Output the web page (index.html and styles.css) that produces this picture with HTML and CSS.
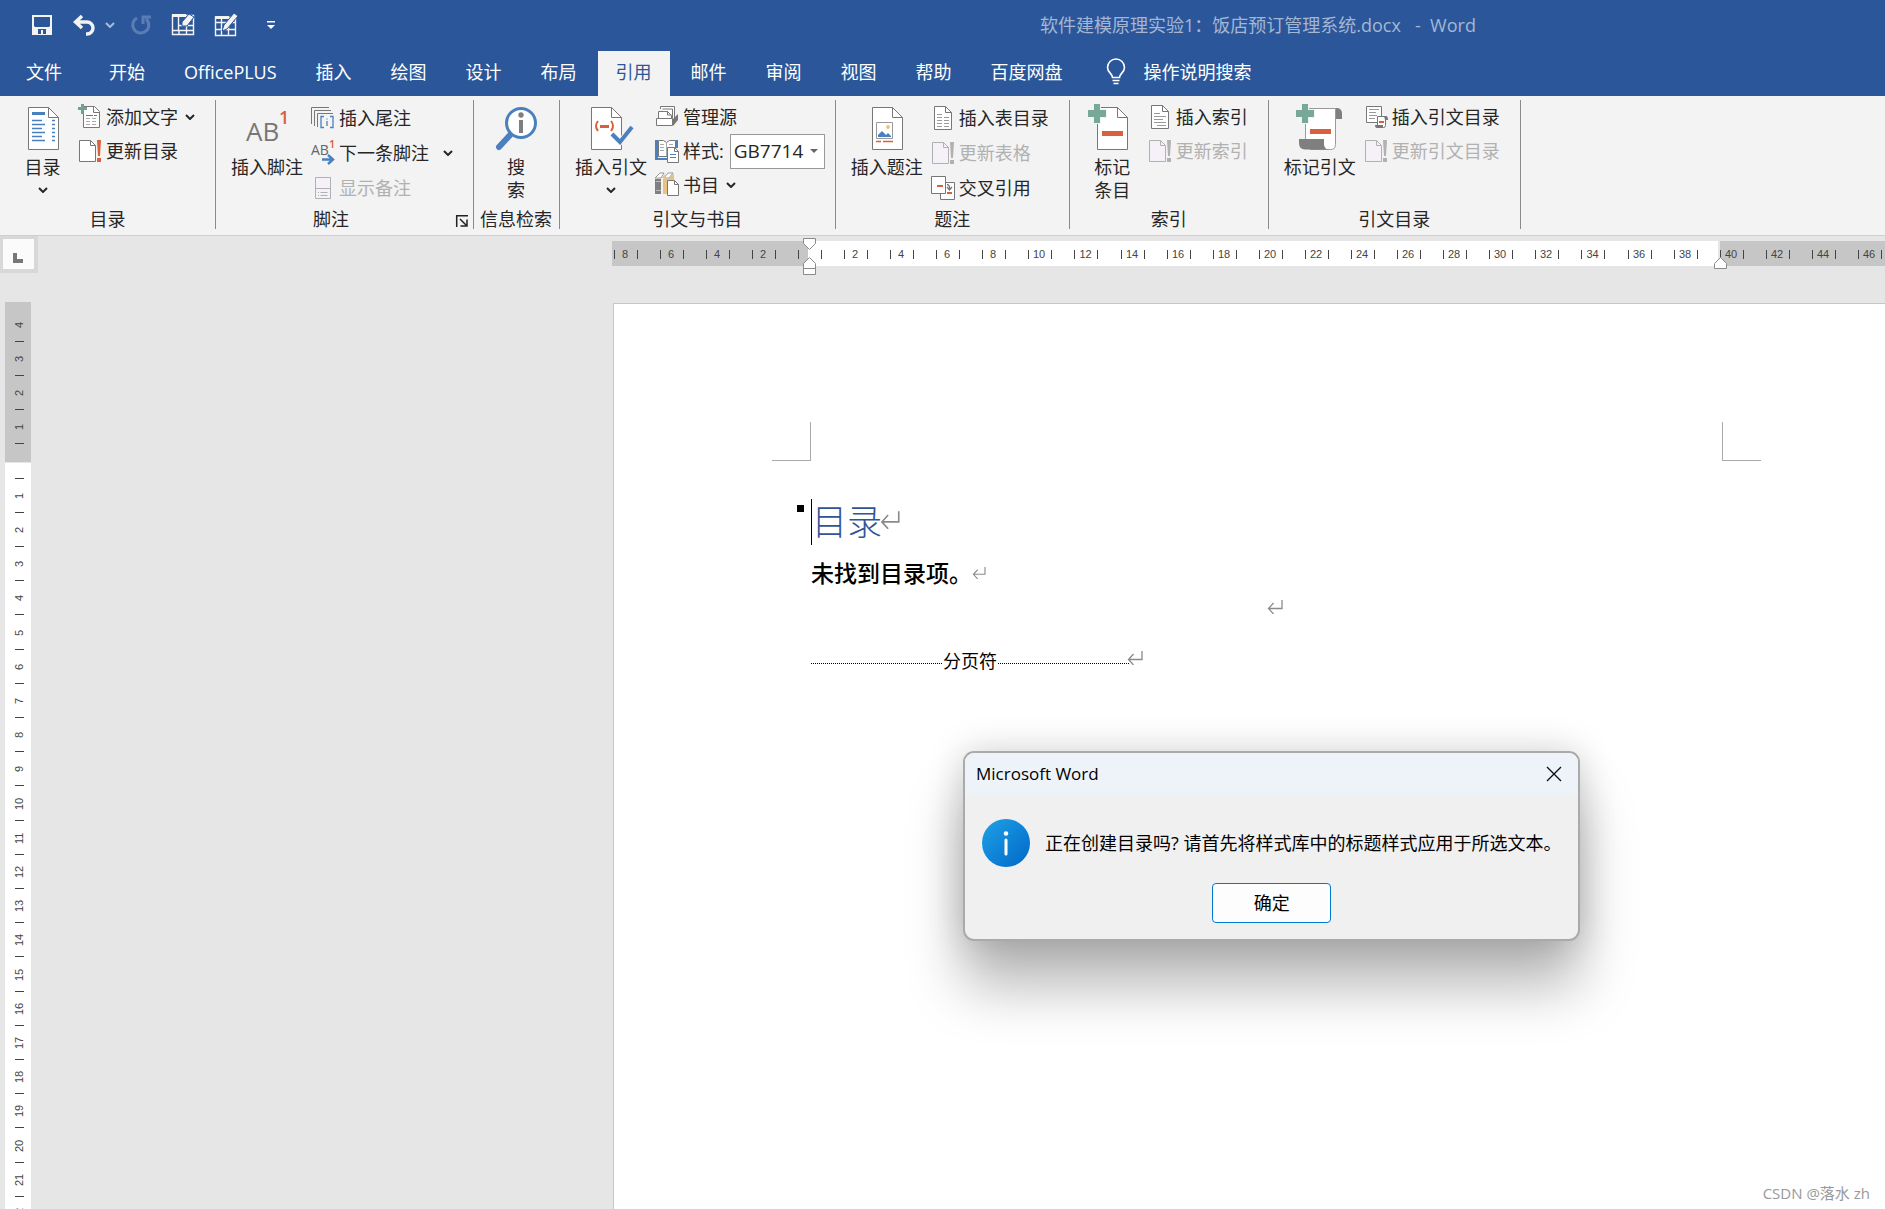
FILE: index.html
```html
<!DOCTYPE html>
<html lang="zh-CN">
<head>
<meta charset="utf-8">
<title>软件建模原理实验1：饭店预订管理系统.docx - Word</title>
<link rel="stylesheet" href="styles.css">
</head>
<body>
<svg class="defs" width="0" height="0" aria-hidden="true">
  <symbol id="chevron" viewBox="0 0 10 6"><path d="M1 1l4 4 4-4" fill="none" stroke="currentColor" stroke-width="2"/></symbol>
  <symbol id="return" viewBox="0 0 16 14"><path d="M15 0v8.500H1.500M6.500 3l-5 5.500 5 5.500" fill="none" stroke="currentColor" stroke-width="1.300"/></symbol>
  <symbol id="update" viewBox="0 0 24 24">
    <path class="sheet" d="M1.500 1.500h11l5 5v16h-16z"/><path class="line" d="M12.500 1.500v5h5"/>
    <path class="mark" d="M19 1h4l-1 16h-2zM19 19h4v4h-4z"/>
  </symbol>
  <symbol id="bigdoc" viewBox="0 0 48 48"><path class="sheet" d="M9.500 5.500h20l10 10v32h-30z"/><path class="line" d="M29.500 5.500v10h10"/></symbol>
</svg>

<header class="top">
  <div class="titlebar">
    <div class="quick">
      <button class="q" aria-label="保存"><svg width="20" height="20" viewBox="0 0 20 20"><path fill="#f3f3f3" fill-rule="evenodd" d="M0 0h20v20H0zM2 2v9l1 1h14l1-1V2zM6 14v5h3v-4h2v4h3v-5z"/></svg></button>
      <button class="q undo" aria-label="撤消"><svg width="24" height="20" viewBox="0 0 24 20"><path d="M9 1L2.500 7 9 13M3 7h11a6 6 0 0 1 0 12h-1" fill="none" stroke="#f3f3f3" stroke-width="3.400"/></svg><svg class="chev" width="10" height="6"><use href="#chevron"/></svg></button>
      <button class="q redo" aria-label="重复" disabled><svg width="20" height="20" viewBox="0 0 20 20"><path d="M6 3a8 8 0 1 0 9 1M12 9V2h8" fill="none" stroke="#5b7db5" stroke-width="3"/></svg></button>
      <button class="q eraser" aria-label="擦除表格"><svg width="24" height="24" viewBox="0 0 24 24"><path d="M1.500 2.500h21v19h-21zM1.500 17.500h21M7.500 2v15M15.500 11v11M8 12.500h15M8 17v5" fill="none" stroke="#f3f3f3" stroke-width="1.400"/><path d="M1 1h14v3H1z" fill="#f3f3f3"/><path d="M11 9l7-8 5 3-7 9h-5z" fill="#f3f3f3" stroke="#2b579a"/></svg></button>
      <button class="q pencil" aria-label="绘制表格"><svg width="24" height="24" viewBox="0 0 24 24"><path d="M1.500 4.500h20v18h-20zM1.500 9.500h20M1.500 16.500h20M7.500 4v18M14.500 14v9" fill="none" stroke="#f3f3f3" stroke-width="1.400"/><path d="M1 3h14v3H1z" fill="#f3f3f3"/><path d="M8 18l2-6L20 0l4 3-11 13z" fill="#f3f3f3" stroke="#2b579a"/></svg></button>
      <button class="q more" aria-label="自定义快速访问工具栏"><svg width="8" height="8" viewBox="0 0 8 8"><path d="M0 0h8v1.500H0zM0 4h8L4 8z" fill="#fff"/></svg></button>
    </div>
    <div class="title">软件建模原理实验1：饭店预订管理系统.docx&nbsp;&nbsp; -&nbsp; Word</div>
  </div>
  <nav class="tabs">
    <button class="tab file">文件</button><button class="tab">开始</button><button class="tab">OfficePLUS</button><button class="tab">插入</button><button class="tab">绘图</button><button class="tab">设计</button><button class="tab">布局</button><button class="tab active">引用</button><button class="tab">邮件</button><button class="tab">审阅</button><button class="tab">视图</button><button class="tab">帮助</button><button class="tab">百度网盘</button>
    <button class="tell"><svg width="20" height="26" viewBox="0 0 20 26"><path d="M6.500 18.500c0-4-5-5-5-10a8.300 8.300 0 0 1 17 0c0 5-5 6-5 10zM6.500 21.500h7M7.500 24.500h5" fill="none" stroke="#fff" stroke-width="1.600"/></svg><span>操作说明搜索</span></button>
  </nav>
</header>

<section class="ribbon">
  <div class="group">
    <div class="tools">
      <button class="big narrow"><svg class="pic" width="48" height="48"><use href="#bigdoc"/><path d="M13 10h13v3H13z" fill="#4a80bd"/><path d="M13 18.500h10M13 22.500h13M13 26.500h10M13 30.500h13M13 34.500h10M13 38.500h13M33 18.500h3M33 22.500h3M33 26.500h3M33 30.500h3M33 34.500h3M33 38.500h3" stroke="#4a80bd" stroke-width="1.400"/></svg><span>目录</span><svg class="chev" width="10" height="6"><use href="#chevron"/></svg></button>
      <div class="stack tight">
        <button class="small"><svg class="pic" width="24" height="24"><path class="sheet" d="M5.500 1.500h11l5 5v16h-16z"/><path class="line" d="M15.500 1.500v6h6"/><path d="M8 13.500h4M14 13.500h4M8 16.500h4M14 16.500h4M8 19.500h4M14 19.500h4" stroke="#aaa"/><path d="M8 10.500h7M16 10.500h3" stroke="#4a80bd"/><path d="M3-1h3v3h3v3H6v4H3V5H0V2h3z" fill="#6ba58f"/></svg><span>添加文字</span><svg class="chev" width="10" height="6"><use href="#chevron"/></svg></button>
        <button class="small"><svg class="pic" width="24" height="24"><use href="#update"/></svg><span>更新目录</span></button>
      </div>
    </div>
    <div class="caption">目录</div>
  </div>

  <div class="group">
    <div class="tools">
      <button class="big"><svg class="pic" width="48" height="48"><text x="3" y="39" class="ab">AB</text><text x="36" y="22" class="one">1</text></svg><span>插入脚注</span></button>
      <div class="stack">
        <button class="small"><svg class="pic" width="24" height="24"><path d="M0.500 18V1.500H18M3.500 20V4.500H20M6.500 21V7.500H22" fill="none" stroke="#777"/><path class="sheet none" d="M9 10h14v12H9z"/><path d="M13 10.500h-3v11h3M19 10.500h3v11h-3M16 12.500v1M16 15v5" fill="none" stroke="#4a80bd" stroke-width="1.300"/></svg><span>插入尾注</span></button>
        <button class="small next"><svg class="pic" width="24" height="24"><text x="0" y="14" class="ab-s">AB</text><text x="18" y="7" class="one-s">1</text><path d="M11 18.500h10M17 14l5 4.500-5 4.500" fill="none" stroke="#4a80bd" stroke-width="2.400"/></svg><span>下一条脚注</span><svg class="chev" width="10" height="6"><use href="#chevron"/></svg></button>
        <button class="small" disabled><svg class="pic" width="24" height="24"><path class="sheet" d="M4.500 1.500h15v21h-15z"/><path class="line" d="M4.500 12.500h15M7 16.500h1M9.500 16.500h7M7 19.500h1M9.500 19.500h7"/></svg><span>显示备注</span></button>
      </div>
    </div>
    <div class="caption launch"><span>脚注</span><button class="launcher" aria-label="脚注和尾注"><svg width="12" height="12" viewBox="0 0 12 12"><path d="M0.700 12V0.700H12M4 4l6 6M11 4.500V11H4.500" fill="none" stroke="#222" stroke-width="1.500"/></svg></button></div>
  </div>

  <div class="group lookup">
    <div class="tools">
      <button class="big"><svg class="pic" width="48" height="48"><path d="M7 45L19 32" stroke="#4a80bd" stroke-width="6" stroke-linecap="round"/><circle cx="29" cy="21" r="14.500" fill="#fff" stroke="#4a80bd" stroke-width="3"/><circle cx="29" cy="13" r="2.700" fill="#7f7f7f"/><path d="M27 18h4v13h-4z" fill="#7f7f7f"/></svg><span>搜<br>索</span></button>
    </div>
    <div class="caption">信息检索</div>
  </div>

  <div class="group cite">
    <div class="tools">
      <button class="big"><svg class="pic" width="48" height="48"><path class="sheet" d="M4.500 5.500h20l10 10v32h-30z"/><path class="line" d="M24.500 5.500v10h10"/><path d="M11 19q-4 5 0 10M24 19q4 5 0 10" fill="none" stroke="#d8603e" stroke-width="2"/><path d="M13 23h9v3h-9z" fill="#d8603e"/><path d="M25 32l8 8 12-15" fill="none" stroke="#f3f3f3" stroke-width="6"/><path d="M25 32l8 8 12-15" fill="none" stroke="#4a80bd" stroke-width="4"/></svg><span>插入引文</span><svg class="chev" width="10" height="6"><use href="#chevron"/></svg></button>
      <div class="stack tight">
        <button class="small"><svg class="pic" width="24" height="24"><path d="M5.500 4V1.500h14V13M7.500 4h10v9M3.500 13V6.500h9l4 4V13M12.500 6v4h4" fill="#fff" stroke="#777"/><path class="sheet" d="M1.500 13.500h16v7h-16z"/><path d="M18 14l5-5v6l-5 6z" fill="#777"/></svg><span>管理源</span></button>
        <div class="small field"><svg class="pic" width="24" height="24"><path d="M0 1h3v18h9v2H0zM21 1h2v8h-2z" fill="#4a80bd"/><path class="sheet" d="M3.500 1.500h5l3 2 3-2h6v16h-17z"/><path d="M11.500 3v14M5 5.500h4M5 8.500h4M5 11.500h4M14 5.500h4" stroke="#aaa"/><path class="sheet" d="M12.500 8.500h7l4 4v11h-11z"/><path class="line" d="M19.500 8.500v4h4"/><path d="M15 15.500h6M15 18.500h6" stroke="#4a80bd"/></svg><label for="style">样式:</label><span class="select"><select id="style"><option>GB7714</option></select><svg width="8" height="4" viewBox="0 0 8 4"><path d="M0 0h8L4 4z" fill="#666"/></svg></span></div>
        <button class="small"><svg class="pic" width="24" height="24"><path d="M0 6h6v15H0z" fill="#7f7f7f"/><path d="M0 5l5-5h4L6 5zM9 5l4-5h5l-4 5z" fill="#fff" stroke="#999"/><path d="M8 6h6v15H8z" fill="#e9c283"/><path d="M14 5l5-5v8h-5zM7 5l3-4v5z" fill="#e9c283"/><path d="M1 8.500h5M1 17.500h5" stroke="#bbb"/><path class="sheet" d="M12.500 7.500h7l4 4v11h-11z"/><path class="line" d="M19.500 7.500v4h4"/></svg><span>书目</span><svg class="chev" width="10" height="6"><use href="#chevron"/></svg></button>
      </div>
    </div>
    <div class="caption">引文与书目</div>
  </div>

  <div class="group">
    <div class="tools">
      <button class="big"><svg class="pic" width="48" height="48"><use href="#bigdoc"/><path d="M13.500 20.500h16v16h-16z" fill="#fff" stroke="#999"/><circle cx="25" cy="25" r="2" fill="#edc77d"/><path d="M15 35v-2l4-4 4 4 2-2 3 3v1z" fill="#4a80bd"/><path d="M13 39.500h5M20 39.500h10" stroke="#d8603e" stroke-width="1.300"/></svg><span>插入题注</span></button>
      <div class="stack">
        <button class="small"><svg class="pic" width="24" height="24"><path class="sheet" d="M3.500 0.500h11l6 6v17h-17z"/><path class="line" d="M14.500 0.500v6h6"/><path d="M6 8.500h5M6 11.500h5M13 11.500h5M6 14.500h5M13 14.500h5M6 17.500h5M13 17.500h5M6 20.500h5M13 20.500h5" stroke="#999"/></svg><span>插入表目录</span></button>
        <button class="small" disabled><svg class="pic" width="24" height="24"><use href="#update"/></svg><span>更新表格</span></button>
        <button class="small"><svg class="pic" width="24" height="24"><path class="sheet" d="M9.500 6.500h14v17h-14z"/><path class="sheet" d="M0.500 0.500h14v17h-14z"/><path d="M6 9h6v2H6zM16 16h5v2h-5z" fill="#d8603e"/><path d="M16 8.500q3 0 2.500 5M16 11l2.500 3 2.500-3" fill="none" stroke="#777" stroke-width="1.300"/></svg><span>交叉引用</span></button>
      </div>
    </div>
    <div class="caption">题注</div>
  </div>

  <div class="group">
    <div class="tools">
      <button class="big narrow"><svg class="pic" width="48" height="48"><use href="#bigdoc"/><path d="M14 29h21v5H14z" fill="#d8603e"/><path d="M6 2h6v6h6v7h-6v6H6v-6H0V8h6z" fill="#78a998" stroke="#f3f3f3" stroke-width="2" paint-order="stroke"/></svg><span>标记<br>条目</span></button>
      <div class="stack tight">
        <button class="small"><svg class="pic" width="24" height="24"><path class="sheet" d="M3.500 0.500h11l6 6v17h-17z"/><path class="line" d="M14.500 0.500v6h6"/><path d="M6 8.500h6M6 11.500h12M6 14.500h9M6 17.500h12M9 20.500h9" stroke="#999"/></svg><span>插入索引</span></button>
        <button class="small" disabled><svg class="pic" width="24" height="24"><use href="#update"/></svg><span>更新索引</span></button>
      </div>
    </div>
    <div class="caption">索引</div>
  </div>

  <div class="group">
    <div class="tools">
      <button class="big"><svg class="pic" width="48" height="48"><path d="M36 6h5a5 5 0 0 1 5 5v6h-8z" fill="#7f7f7f"/><path d="M9.500 6.500h30v36q0 5-5 5H14l-4.500-9z" fill="#fff" stroke="#999"/><path d="M3 37h25v6q1 4 4 4.500H9q-6 0-6-7z" fill="#7f7f7f"/><path d="M14 27h21v5H14z" fill="#d8603e"/><path d="M6 2h6v6h6v7h-6v6H6v-6H0V8h6z" fill="#78a998" stroke="#f3f3f3" stroke-width="2" paint-order="stroke"/></svg><span>标记引文</span></button>
      <div class="stack tight">
        <button class="small"><svg class="pic" width="24" height="24"><path class="sheet" d="M2.500 1.500h15v16h-15z"/><path d="M5 4.500h10M5 7.500h7M5 10.500h8M5 13.500h6" stroke="#999"/><path d="M13.500 11.500h8v9q0 2-2 2h-6z" fill="#fff" stroke="#777"/><path d="M20 11h2q2 0 2 4h-3zM11 20h8v3h-6q-2 0-2-3z" fill="#777"/><path d="M15 16h5v2h-5z" fill="#d8603e"/></svg><span>插入引文目录</span></button>
        <button class="small" disabled><svg class="pic" width="24" height="24"><use href="#update"/></svg><span>更新引文目录</span></button>
      </div>
    </div>
    <div class="caption">引文目录</div>
  </div>
</section>

<main class="work">
  <div class="gutter">
    <button class="tabstop" aria-label="左对齐式制表符"><svg width="10" height="10" viewBox="0 0 10 10"><path d="M0 0h4v6h6v4H0z" fill="#777"/></svg></button>
    <div class="vruler"><i>4</i><i>3</i><i>2</i><i>1</i><i></i><i>1</i><i>2</i><i>3</i><i>4</i><i>5</i><i>6</i><i>7</i><i>8</i><i>9</i><i>10</i><i>11</i><i>12</i><i>13</i><i>14</i><i>15</i><i>16</i><i>17</i><i>18</i><i>19</i><i>20</i><i>21</i><i>22</i></div>
  </div>
  <div class="canvas">
    <div class="hruler">
      <div class="scale"><i>8</i><i>6</i><i>4</i><i>2</i><i></i><i>2</i><i>4</i><i>6</i><i>8</i><i>10</i><i>12</i><i>14</i><i>16</i><i>18</i><i>20</i><i>22</i><i>24</i><i>26</i><i>28</i><i>30</i><i>32</i><i>34</i><i>36</i><i>38</i><i>40</i><i>42</i><i>44</i><i>46</i></div>
      <svg class="indent left" width="14" height="38" viewBox="0 0 14 38"><path d="M0.500 0.500h12v5l-6 6-6-6zM6.500 19.500l6 6v11h-12v-11zM0.500 30.500h12" fill="#fff" stroke="#8a8a8a"/></svg>
      <svg class="indent right" width="14" height="38" viewBox="0 0 14 38"><path d="M6.500 19.500l6 6v5h-12v-5z" fill="#fff" stroke="#8a8a8a"/></svg>
    </div>
    <article class="page">
      <div class="corners"><span class="corner tl"></span><span class="corner tr"></span></div>
      <div class="text">
        <h1><span class="bullet"></span>目录<svg class="ret" width="20" height="18"><use href="#return"/></svg></h1>
        <p class="none-found">未找到目录项。<svg class="ret" width="14" height="12"><use href="#return"/></svg></p>
        <p class="empty"><svg class="ret" width="16" height="14"><use href="#return"/></svg></p>
        <p class="break"><span class="dots"></span>分页符<span class="dots"></span><svg class="ret" width="16" height="14"><use href="#return"/></svg></p>
      </div>
    </article>
  </div>
</main>

<section class="dialog" role="dialog" aria-labelledby="dlg">
  <header><h2 id="dlg">Microsoft Word</h2><button class="close" aria-label="关闭"><svg width="16" height="16" viewBox="0 0 16 16"><path d="M1 1l14 14M15 1L1 15" stroke="#111" stroke-width="1.400"/></svg></button></header>
  <div class="msg"><svg width="48" height="48" viewBox="0 0 48 48"><defs><linearGradient id="g" x1="0" y1="0" x2="1" y2="1"><stop offset="0" stop-color="#1fa2e6"/><stop offset="1" stop-color="#0067c8"/></linearGradient></defs><circle cx="24" cy="24" r="24" fill="url(#g)"/><circle cx="24" cy="14.500" r="2.300" fill="#fff"/><path d="M24 21v14" stroke="#fff" stroke-width="3" stroke-linecap="round"/></svg><p>正在创建目录吗? 请首先将样式库中的标题样式应用于所选文本。</p></div>
  <button class="ok">确定</button>
</section>
<div class="watermark">CSDN @落水 zh</div>
</body>
</html>
```

FILE: styles.css
```css
* { box-sizing: border-box; }

body {
  margin: 0;
  height: 100vh;
  display: flex;
  flex-direction: column;
  overflow: hidden;
  position: relative;
  background: #e6e6e6;
  color: #262626;
  font: 18px/24px "Open Sans", "Noto Sans CJK SC", sans-serif;
}

button {
  margin: 0;
  padding: 0;
  border: 0;
  background: none;
  color: inherit;
  font: inherit;
  white-space: nowrap;
}

svg { display: block; flex: none; overflow: visible; }
.defs { position: absolute; }

/* title bar and tabs */
.top { background: #2b579a; color: #fff; flex: none; }
.titlebar { display: flex; height: 51px; align-items: center; padding-bottom: 2px; }
.quick { display: flex; align-items: center; width: 1040px; padding-left: 32px; flex: none; }
.undo { display: flex; align-items: center; gap: 8px; margin-left: 21px; color: #a9bbd8; }
.redo { margin-left: 16px; }
.eraser { margin-left: 20px; }
.pencil { margin-left: 19px; }
.more { margin-left: 29px; }
.title { color: #a4b6d4; white-space: nowrap; }
.tabs { display: flex; gap: 3px; height: 45px; padding-left: 8px; }
.tab { padding: 0 18px 3px; }
.tab.file { margin-right: 8px; }
.tab.active { background: #f3f3f3; color: #2b579a; }
.tell { display: flex; align-items: center; gap: 18px; margin-left: 22px; padding-bottom: 3px; }

/* ribbon */
.ribbon {
  display: flex;
  flex: none;
  height: 140px;
  padding: 4px 0 6px;
  background: #f3f3f3;
  border-bottom: 1px solid #d0d0d0;
}
.group {
  display: flex;
  flex-direction: column;
  justify-content: space-between;
  padding: 0 20px 0 15px;
  border-right: 1px solid #8a8a8a;
}
.cite { padding-right: 10px; }
.lookup { padding: 0 7px 0 6px; }
.tools { display: flex; gap: 8px; }
.big {
  display: flex;
  flex-direction: column;
  align-items: center;
  width: 72px;
  padding-top: 2px;
  line-height: 23px;
}
.big.narrow { width: 55px; }
.big .pic { margin-bottom: 6px; }
.big .chev { margin-top: 8px; }
.small { display: flex; align-items: center; height: 35px; gap: 4px; }
.tight .small { height: 34px; }
.small .chev { margin-left: 3px; }
.next .chev { margin-left: 10px; }
.field { white-space: nowrap; }
.select {
  display: flex;
  align-items: center;
  width: 95px;
  height: 35px;
  flex: none;
  margin-left: 2px;
  padding-right: 6px;
  border: 1px solid #999;
  background: #fff;
}
select {
  flex: 1;
  min-width: 0;
  height: 100%;
  padding: 0 0 0 3px;
  border: 0;
  background: none;
  appearance: none;
  color: #262626;
  font: 19px "Open Sans", sans-serif;
}
.caption { text-align: center; line-height: 20px; height: 20px; margin: 0 -15px 0 -10px; white-space: nowrap; }
.cite .caption { margin: 0 -10px 0 -15px; }
.lookup .caption { margin: 0; }
.caption.launch { display: flex; align-items: center; padding: 0 5px 0 0; margin: 0 -20px 0 -15px; }
.launch span { flex: 1; padding-right: 10px; }
.launcher { padding-top: 4px; }

/* icon inks; disabled buttons swap them for grey */
.sheet { fill: var(--sheet, #fff); stroke: var(--ink, #777); }
.sheet.none { fill: #f3f3f3; stroke: none; }
.line { fill: none; stroke: var(--ink, #777); }
.mark { fill: var(--mark, #d8603e); }
.small:disabled { color: #b1b1b1; --sheet: #f6f0f8; --ink: #b1b1b1; --mark: #b1b1b1; }
.ab { font-size: 26px; font-weight: 500; fill: #777; }
.one { font-size: 18px; font-weight: 600; fill: #d8603e; }
.ab-s { font-size: 14px; fill: #666; }
.one-s { font-size: 11px; font-weight: 600; fill: #d8603e; }

/* rulers */
.work { flex: 1; min-height: 0; display: flex; }
.gutter { display: flex; flex-direction: column; width: 612px; flex: none; }
.tabstop {
  width: 38px;
  height: 37px;
  flex: none;
  border: 3px solid #d8d8d8;
  border-right-width: 4px;
  border-bottom-width: 4px;
  background: #fbfbfb;
  padding: 8px 0 0 10px;
}
i { font: 11px/12px "Liberation Sans", sans-serif; color: #444; }
.vruler {
  flex: 1;
  min-height: 0;
  overflow: hidden;
  width: 26px;
  margin: 29px 0 0 5px;
  padding: 6px 0 0 2px;
  background: linear-gradient(#c6c6c6 160px, #e6e6e6 160px, #e6e6e6 161px, #fff 161px);
}
.vruler i {
  display: flex;
  align-items: center;
  justify-content: center;
  width: 100%;
  height: 34px;
  writing-mode: vertical-rl;
  transform: rotate(180deg);
  background: linear-gradient(#444, #444) 7px 0 / 9px 1px no-repeat;
}
.vruler i:nth-child(5n) { height: 35px; }
.canvas { flex: 1; min-width: 0; display: flex; flex-direction: column; }
.hruler {
  position: relative;
  flex: none;
  height: 25px;
  margin-top: 5px;
  background: linear-gradient(90deg, #c6c6c6 196px, #fff 196px, #fff 1106px, #e6e6e6 1106px, #e6e6e6 1108px, #c6c6c6 1108px);
}
.scale { display: flex; height: 100%; align-items: center; margin-left: -10px; width: calc(100% + 10px); overflow: hidden; clip-path: inset(0 0 0 10px); }
.scale i {
  flex: none;
  width: 46px;
  height: 12px;
  text-align: center;
  background:
    linear-gradient(#444, #444) 12px 2px / 1px 9px no-repeat,
    linear-gradient(#444, #444) 35px 2px / 1px 9px no-repeat;
}
.scale i:nth-child(11n) { width: 47px; }
.indent { position: absolute; top: -3px; }
.indent.left { left: 191px; }
.indent.right { left: 1102px; }

/* document page */
.page {
  flex: 1;
  min-height: 0;
  margin: 37px 0 0 1px;
  border: solid #c6c6c6;
  border-width: 1px 0 0 1px;
  background: #fff;
  padding: 118px 124px 0 158px;
}
.corners { display: flex; justify-content: space-between; }
.corner { width: 39px; height: 39px; border: 0 solid #aaa; border-bottom-width: 1px; }
.corner.tl { border-right-width: 1px; }
.corner.tr { border-left-width: 1px; }
.text { padding: 38px 39px 0; color: #000; }
.ret { color: #8a8a8a; }
h1, .text p { margin: 0; display: flex; align-items: center; }
h1 {
  position: relative;
  height: 46px;
  border-left: 1px solid #000;
  color: #2f5496;
  font-size: 35px;
  font-weight: 300;
  line-height: 46px;
}
h1 .ret { margin: -4px 0 0 -2px; }
.bullet { position: absolute; left: -15px; top: 6px; width: 7px; height: 7px; background: #000; }
.none-found { height: 56px; font-size: 23px; font-weight: 500; }
.text .empty { height: 12px; justify-content: center; padding-left: 16px; }
.text .break { height: 96px; gap: 1px; }
.dots { width: 131px; height: 1px; margin-top: 4px; background: repeating-linear-gradient(90deg, #000 0 1px, transparent 1px 2px); }
.break .ret { margin: -6px 0 0 -3px; }

/* message box */
.dialog {
  position: absolute;
  left: 963px;
  top: 751px;
  display: flex;
  flex-direction: column;
  align-items: center;
  padding-bottom: 16px;
  border: 2px solid #aaa;
  border-radius: 11px;
  background: #f0f0f0;
  color: #000;
  box-shadow: 0 46px 56px rgba(0, 0, 0, .28), 0 0 36px rgba(0, 0, 0, .18);
}
.dialog header {
  display: flex;
  align-items: center;
  justify-content: space-between;
  align-self: stretch;
  height: 42px;
  padding: 0 16px 0 11px;
  border-radius: 9px 9px 0 0;
  background: #eef3f9;
}
.dialog h2 { margin: 0; font-size: 17px; font-weight: 400; }
.msg { display: flex; align-items: center; gap: 15px; padding: 24px 17px 16px; }
.msg p { margin: 0; white-space: nowrap; }
.ok { width: 119px; height: 40px; border: 1px solid #0078d4; border-radius: 4px; background: #fdfdfd; }

.watermark { position: absolute; right: 15px; bottom: 5px; font-size: 15px; line-height: 22px; color: #999; }
```
